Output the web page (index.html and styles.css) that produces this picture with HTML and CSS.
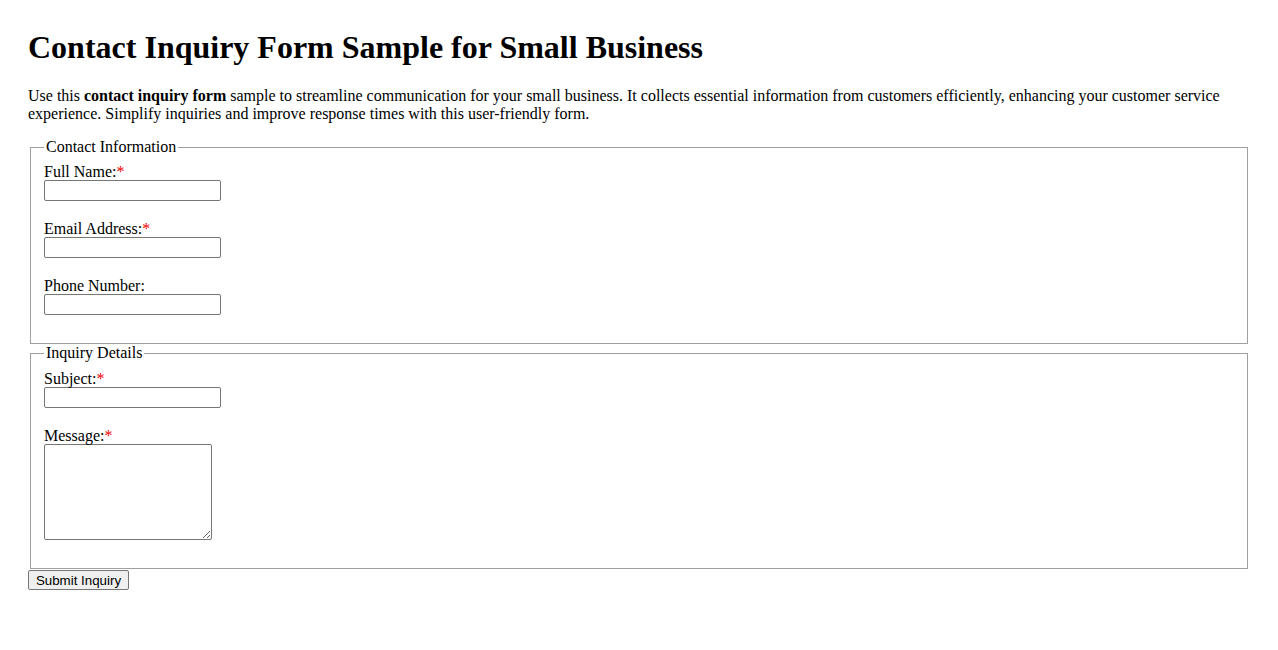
FILE: index.html
```html
<!DOCTYPE html>
<html lang="en">
<head>
<meta charset="utf-8">
<title>Contact Inquiry Form Sample for Small Business</title>
<link rel="stylesheet" href="styles.css">
</head>
<body>
<main class="page">
  <h1 class="title">Contact Inquiry Form Sample for Small Business</h1>
  <p class="intro">Use this <strong>contact inquiry form</strong> sample to streamline communication for your small business. It collects essential information from customers efficiently, enhancing your customer service experience. Simplify inquiries and improve response times with this user-friendly form.</p>
  <form class="inquiry-form" action="#" method="post">
    <fieldset class="section">
      <legend class="section-title">Contact Information</legend>
      <div class="field">
        <label class="field-label" for="full-name">Full Name:<span class="req">*</span></label>
        <input class="text-input" type="text" id="full-name" name="full_name" required>
      </div>
      <div class="field">
        <label class="field-label" for="email">Email Address:<span class="req">*</span></label>
        <input class="text-input" type="email" id="email" name="email" required>
      </div>
      <div class="field">
        <label class="field-label" for="phone">Phone Number:</label>
        <input class="text-input" type="tel" id="phone" name="phone">
      </div>
    </fieldset>
    <fieldset class="section">
      <legend class="section-title">Inquiry Details</legend>
      <div class="field">
        <label class="field-label" for="subject">Subject:<span class="req">*</span></label>
        <input class="text-input" type="text" id="subject" name="subject" required>
      </div>
      <div class="field">
        <label class="field-label" for="message">Message:<span class="req">*</span></label>
        <textarea class="message-input" id="message" name="message" required></textarea>
      </div>
    </fieldset>
    <button class="submit-btn" type="submit">Submit Inquiry</button>
  </form>
</main>
</body>
</html>
```

FILE: styles.css
```css
html, body {
  margin: 0;
  background: #ffffff;
}

body {
  font-family: "Liberation Serif", "Times New Roman", serif;
  font-size: 16px;
  color: #000000;
}

.page {
  padding: 29px 28px 28px;
}

.title {
  margin: 0 0 21px;
  font-size: 32px;
  font-weight: bold;
}

.intro {
  margin: 0 0 15px;
  line-height: 18px;
}

.inquiry-form {
  margin: 0;
}

.section {
  margin: 0 2px;
  padding: 7px 13px 9px;
  border: 1px solid #a0a0a0;
}

.section + .section {
  padding-top: 8px;
}

.section-title {
  padding: 0 2px;
  line-height: 18px;
}

.field {
  margin-bottom: 19px;
}

.field-label {
  display: block;
  line-height: 17px;
}

.req {
  color: #ee0000;
}

.text-input {
  display: block;
  box-sizing: border-box;
  width: 177px;
  height: 21px;
  margin: 0;
  padding: 1px 2px;
  border: 1px solid #767676;
  border-radius: 2px;
  font-family: "Liberation Sans", Arial, sans-serif;
  font-size: 13.33px;
}

.message-input {
  display: block;
  box-sizing: border-box;
  width: 168px;
  height: 96px;
  margin: 0;
  padding: 2px;
  border: 1px solid #767676;
  border-radius: 2px;
  font-family: "Liberation Mono", monospace;
  font-size: 13.33px;
  resize: both;
}

.submit-btn {
  display: block;
  box-sizing: border-box;
  width: 101px;
  height: 20px;
  margin: 1px 0 0;
  padding: 0 6px;
  font-family: "Liberation Sans", Arial, sans-serif;
  font-size: 13.33px;
  color: #000000;
  background: #efefef;
  border: 1px solid #767676;
  border-radius: 2px;
}
```
